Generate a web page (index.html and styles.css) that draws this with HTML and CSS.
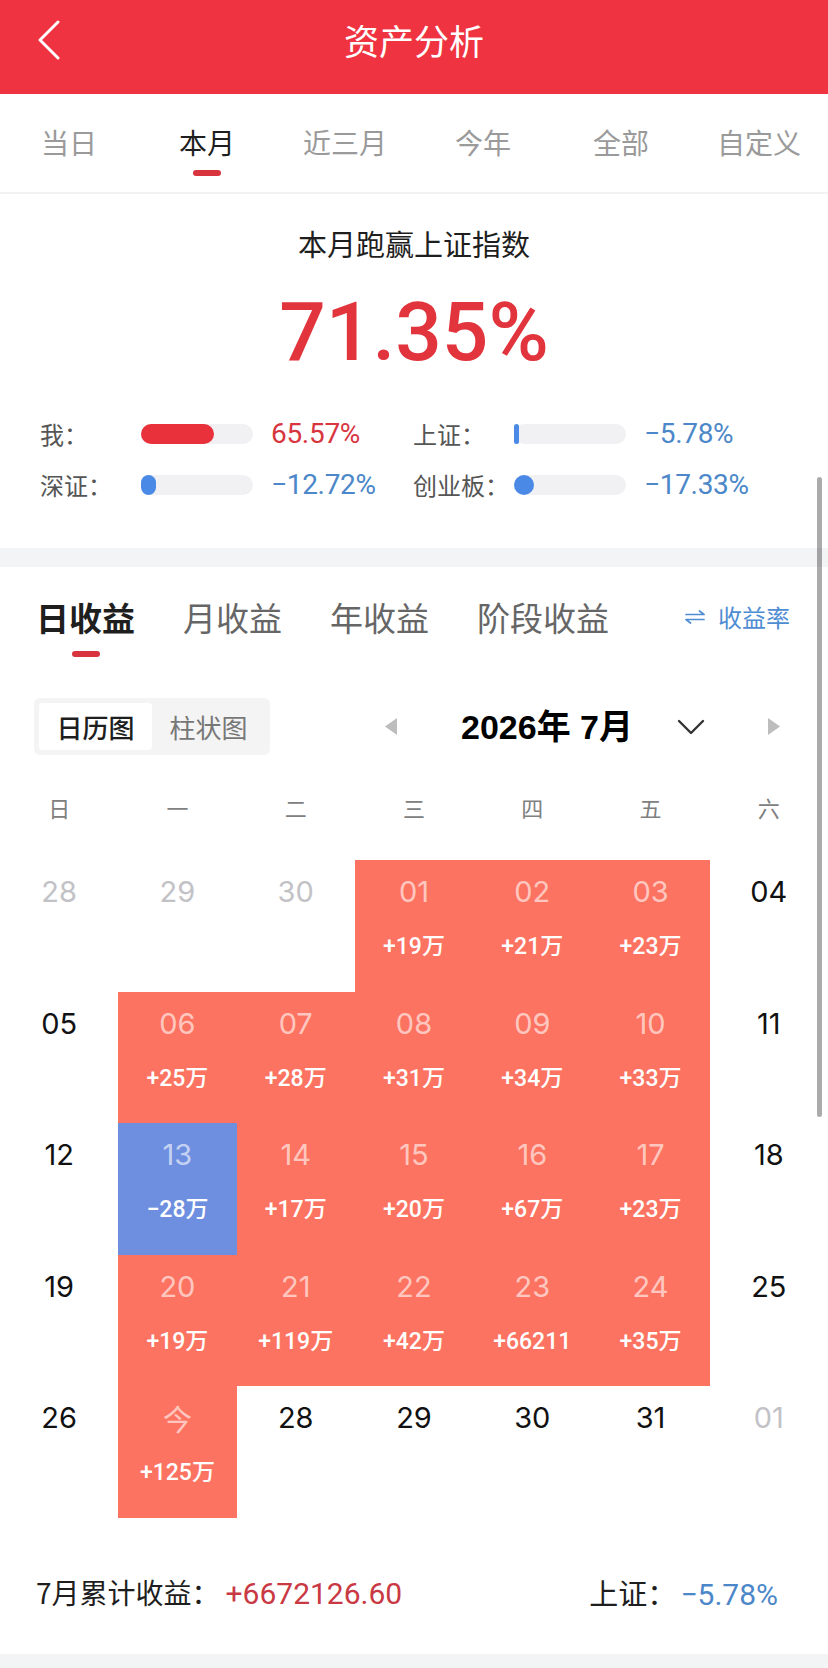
FILE: index.html
```html
<!DOCTYPE html>
<html lang="zh-CN">
<head>
<meta charset="utf-8">
<title>资产分析</title>
<link rel="stylesheet" href="styles.css">
</head>
<body>
<div class="page">
  <header class="navbar">
    <div class="nav-back">
      <svg width="24" height="40" viewBox="0 0 24 40"><polyline points="21,2 3,20 21,38" fill="none" stroke="#fff" stroke-width="3" stroke-linecap="round" stroke-linejoin="round"/></svg>
    </div>
    <h1 class="nav-title">资产分析</h1>
    <div></div>
  </header>

  <nav class="period-tabs">
    <div class="period-tab">当日</div>
    <div class="period-tab active">本月</div>
    <div class="period-tab">近三月</div>
    <div class="period-tab">今年</div>
    <div class="period-tab">全部</div>
    <div class="period-tab">自定义</div>
  </nav>

  <section class="compare">
    <div class="compare-title">本月跑赢上证指数</div>
    <div class="compare-value">71.35%</div>
    <div class="compare-grid">
      <div class="cmp-item">
        <span class="cmp-label">我：</span>
        <div class="track"><div class="fill red" style="width:73px"></div></div>
        <span class="cmp-val up">65.57%</span>
      </div>
      <div class="cmp-item">
        <span class="cmp-label">上证：</span>
        <div class="track"><div class="fill blue" style="width:5px"></div></div>
        <span class="cmp-val down">−5.78%</span>
      </div>
      <div class="cmp-item">
        <span class="cmp-label">深证：</span>
        <div class="track"><div class="fill blue" style="width:15px"></div></div>
        <span class="cmp-val down">−12.72%</span>
      </div>
      <div class="cmp-item">
        <span class="cmp-label">创业板：</span>
        <div class="track"><div class="fill blue" style="width:20px"></div></div>
        <span class="cmp-val down">−17.33%</span>
      </div>
    </div>
  </section>

  <div class="band"></div>

  <section class="income">
    <div class="income-tabs">
      <div class="income-tab active">日收益</div>
      <div class="income-tab">月收益</div>
      <div class="income-tab">年收益</div>
      <div class="income-tab">阶段收益</div>
      <div class="rate-switch">
        <svg width="22" height="14" viewBox="0 0 22 14"><path d="M2 4.5 H20 L15.5 1 M20 9.5 H2 L6.5 13" fill="none" stroke="#4f8dd3" stroke-width="1.7" stroke-linecap="round" stroke-linejoin="round"/></svg>
        <span>收益率</span>
      </div>
    </div>

    <div class="toolbar">
      <div class="seg">
        <div class="seg-item active">日历图</div>
        <div class="seg-item">柱状图</div>
      </div>
      <div class="month-nav">
        <svg class="tri-left" width="14" height="17" viewBox="0 0 14 17"><polygon points="13,0 13,17 1,8.5" fill="#bdbdbd"/></svg>
        <span class="month-label">2026年 7月</span>
        <svg class="chev" width="28" height="16" viewBox="0 0 28 16"><polyline points="2,2 14,14 26,2" fill="none" stroke="#333" stroke-width="2.4" stroke-linecap="round" stroke-linejoin="round"/></svg>
        <svg class="tri-right" width="14" height="17" viewBox="0 0 14 17"><polygon points="1,0 1,17 13,8.5" fill="#bdbdbd"/></svg>
      </div>
    </div>

    <div class="weekdays">
      <span>日</span><span>一</span><span>二</span><span>三</span><span>四</span><span>五</span><span>六</span>
    </div>

    <div class="calendar">
      <div class="day other"><span class="num">28</span></div>
      <div class="day other"><span class="num">29</span></div>
      <div class="day other"><span class="num">30</span></div>
      <div class="day up"><span class="num">01</span><span class="amt">+19万</span></div>
      <div class="day up"><span class="num">02</span><span class="amt">+21万</span></div>
      <div class="day up"><span class="num">03</span><span class="amt">+23万</span></div>
      <div class="day"><span class="num">04</span></div>

      <div class="day"><span class="num">05</span></div>
      <div class="day up"><span class="num">06</span><span class="amt">+25万</span></div>
      <div class="day up"><span class="num">07</span><span class="amt">+28万</span></div>
      <div class="day up"><span class="num">08</span><span class="amt">+31万</span></div>
      <div class="day up"><span class="num">09</span><span class="amt">+34万</span></div>
      <div class="day up"><span class="num">10</span><span class="amt">+33万</span></div>
      <div class="day"><span class="num">11</span></div>

      <div class="day"><span class="num">12</span></div>
      <div class="day down"><span class="num">13</span><span class="amt">−28万</span></div>
      <div class="day up"><span class="num">14</span><span class="amt">+17万</span></div>
      <div class="day up"><span class="num">15</span><span class="amt">+20万</span></div>
      <div class="day up"><span class="num">16</span><span class="amt">+67万</span></div>
      <div class="day up"><span class="num">17</span><span class="amt">+23万</span></div>
      <div class="day"><span class="num">18</span></div>

      <div class="day"><span class="num">19</span></div>
      <div class="day up"><span class="num">20</span><span class="amt">+19万</span></div>
      <div class="day up"><span class="num">21</span><span class="amt">+119万</span></div>
      <div class="day up"><span class="num">22</span><span class="amt">+42万</span></div>
      <div class="day up"><span class="num">23</span><span class="amt">+66211</span></div>
      <div class="day up"><span class="num">24</span><span class="amt">+35万</span></div>
      <div class="day"><span class="num">25</span></div>

      <div class="day"><span class="num">26</span></div>
      <div class="day up"><span class="num today">今</span><span class="amt">+125万</span></div>
      <div class="day"><span class="num">28</span></div>
      <div class="day"><span class="num">29</span></div>
      <div class="day"><span class="num">30</span></div>
      <div class="day"><span class="num">31</span></div>
      <div class="day other"><span class="num">01</span></div>
    </div>

    <div class="summary">
      <div class="sum-left">7月累计收益：<span class="sum-up">+6672126.60</span></div>
      <div class="sum-right">上证：<span class="sum-down">−5.78%</span></div>
    </div>
  </section>

  <div class="band bottom"></div>

  <div class="scroll-indicator"></div>
</div>
</body>
</html>
```

FILE: styles.css
```css
* { box-sizing: border-box; }

body {
  margin: 0;
  background: #fff;
  font-family: "Noto Sans CJK SC", "Noto Sans", sans-serif;
  color: #222;
}

.page {
  position: relative;
  width: 828px;
  min-height: 1668px;
  overflow: hidden;
}

/* nav bar */
.navbar {
  height: 94px;
  padding-bottom: 14px;
  background: #ef3340;
  display: grid;
  grid-template-columns: 120px 1fr 120px;
  align-items: center;
}
.nav-back {
  padding-left: 37px;
  display: flex;
  align-items: center;
}
.nav-title {
  margin: 0;
  text-align: center;
  color: #fff;
  font-size: 35px;
  font-weight: 400;
  line-height: 44px;
}

/* period tabs */
.period-tabs {
  display: grid;
  grid-template-columns: repeat(6, 1fr);
  padding-top: 28px;
  padding-bottom: 16px;
  border-bottom: 2px solid #f2f2f2;
}
.period-tab {
  display: flex;
  flex-direction: column;
  align-items: center;
  font-size: 28px;
  line-height: 40px;
  color: #9a9a9a;
}
.period-tab::after {
  content: "";
  width: 28px;
  height: 6px;
  margin-top: 8px;
  border-radius: 3px;
  background: transparent;
}
.period-tab.active { color: #1e1e1e; }
.period-tab.active::after { background: #d7343e; }

/* compare */
.compare {
  padding: 29px 0 48px;
}
.compare-title {
  text-align: center;
  font-size: 29px;
  line-height: 40px;
  color: #1e1e1e;
}
.compare-value {
  margin-top: 19px;
  text-align: center;
  font-family: Roboto, "Noto Sans", sans-serif;
  font-weight: 500;
  font-size: 82px;
  line-height: 100px;
  color: #e2343d;
}
.compare-grid {
  margin-top: 37px;
  padding-left: 40px;
  display: grid;
  grid-template-columns: 373px 1fr;
  row-gap: 21px;
}
.cmp-item {
  display: grid;
  grid-template-columns: 101px 112px auto;
  align-items: center;
  height: 30px;
}
.cmp-label {
  font-size: 24px;
  line-height: 30px;
  color: #555;
}
.track {
  height: 20px;
  border-radius: 10px;
  background: #f1f1f3;
}
.fill {
  height: 100%;
  border-radius: 10px;
}
.fill.red { background: #e8313b; }
.fill.blue { background: #4a8ae6; }
.cmp-val {
  margin-left: 18px;
  font-family: Roboto, "Noto Sans", sans-serif;
  font-size: 28px;
  line-height: 30px;
  letter-spacing: -0.3px;
}
.cmp-val.up { color: #d8363f; }
.cmp-val.down { color: #4c87c9; }

.band {
  height: 19px;
  background: #f3f4f6;
}
.band.bottom {
  margin-top: 39px;
  height: 20px;
}

/* income tabs */
.income-tabs {
  display: flex;
  align-items: flex-start;
  gap: 48px;
  padding: 28px 38px 0 36px;
}
.income-tab {
  display: flex;
  flex-direction: column;
  align-items: center;
  font-size: 33px;
  line-height: 44px;
  color: #666;
}
.income-tab::after {
  content: "";
  width: 28px;
  height: 6px;
  margin-top: 12px;
  border-radius: 3px;
  background: transparent;
}
.income-tab.active {
  color: #1e1e1e;
  font-weight: 700;
}
.income-tab.active::after { background: #d7343e; }
.rate-switch {
  margin-left: auto;
  display: flex;
  align-items: center;
  gap: 12px;
  font-size: 24px;
  line-height: 44px;
  color: #4f8dd3;
}

/* toolbar */
.toolbar {
  margin-top: 41px;
  padding-left: 34px;
  display: flex;
  align-items: center;
  height: 57px;
}
.seg {
  display: flex;
  padding: 5px;
  border-radius: 6px;
  background: #f4f4f5;
}
.seg-item {
  width: 113px;
  height: 47px;
  text-align: center;
  font-size: 26px;
  line-height: 47px;
  color: #777;
}
.seg-item.active {
  background: #fff;
  border-radius: 4px;
  color: #1e1e1e;
  font-weight: 500;
}
.month-nav {
  margin-left: 114px;
  display: flex;
  align-items: center;
}
.month-label {
  margin-left: 63px;
  font-family: "Liberation Sans", "Noto Sans CJK SC", sans-serif;
  font-weight: 700;
  font-size: 34px;
  line-height: 44px;
  color: #000;
}
.chev { margin-left: 44px; }
.tri-right { margin-left: 62px; }

/* weekdays */
.weekdays {
  margin-top: 37px;
  display: grid;
  grid-template-columns: repeat(7, 1fr);
  text-align: center;
  font-size: 22px;
  line-height: 30px;
  color: #808080;
}

/* calendar */
.calendar {
  margin-top: 38px;
  display: grid;
  grid-template-columns: repeat(7, 1fr);
  grid-auto-rows: 131.5px;
}
.day {
  display: flex;
  flex-direction: column;
  align-items: center;
  padding-top: 12px;
}
.num {
  font-family: Inter, Roboto, "Noto Sans CJK SC", sans-serif;
  font-size: 29px;
  line-height: 40px;
  color: #111;
}
.num.today {
  font-family: "Noto Sans CJK SC", sans-serif;
  font-size: 29px;
}
.day.other .num { color: #c2c2c6; }
.day.up { background: #fd7361; }
.day.down { background: #6e8fe0; }
.day.up .num,
.day.down .num { color: rgba(255, 255, 255, 0.62); }
.amt {
  margin-top: 20px;
  font-family: Roboto, "Noto Sans CJK SC", sans-serif;
  font-weight: 500;
  font-size: 23px;
  line-height: 30px;
  color: #fff;
}

/* summary */
.summary {
  margin-top: 54px;
  padding: 0 50px 0 36px;
  display: flex;
  justify-content: space-between;
  font-size: 28px;
  line-height: 40px;
  color: #1e1e1e;
}
.sum-up {
  margin-left: 6px;
  font-family: Roboto, "Noto Sans", sans-serif;
  font-size: 30px;
  color: #c93944;
}
.sum-right { font-size: 29px; }
.sum-down {
  margin-left: 4px;
  font-family: Roboto, "Noto Sans", sans-serif;
  font-size: 30px;
  color: #4c87c9;
}

/* iOS scroll indicator overlay */
.scroll-indicator {
  position: absolute;
  left: 817px;
  top: 477px;
  width: 5px;
  height: 640px;
  border-radius: 3px;
  background: rgba(0, 0, 0, 0.33);
}
```
